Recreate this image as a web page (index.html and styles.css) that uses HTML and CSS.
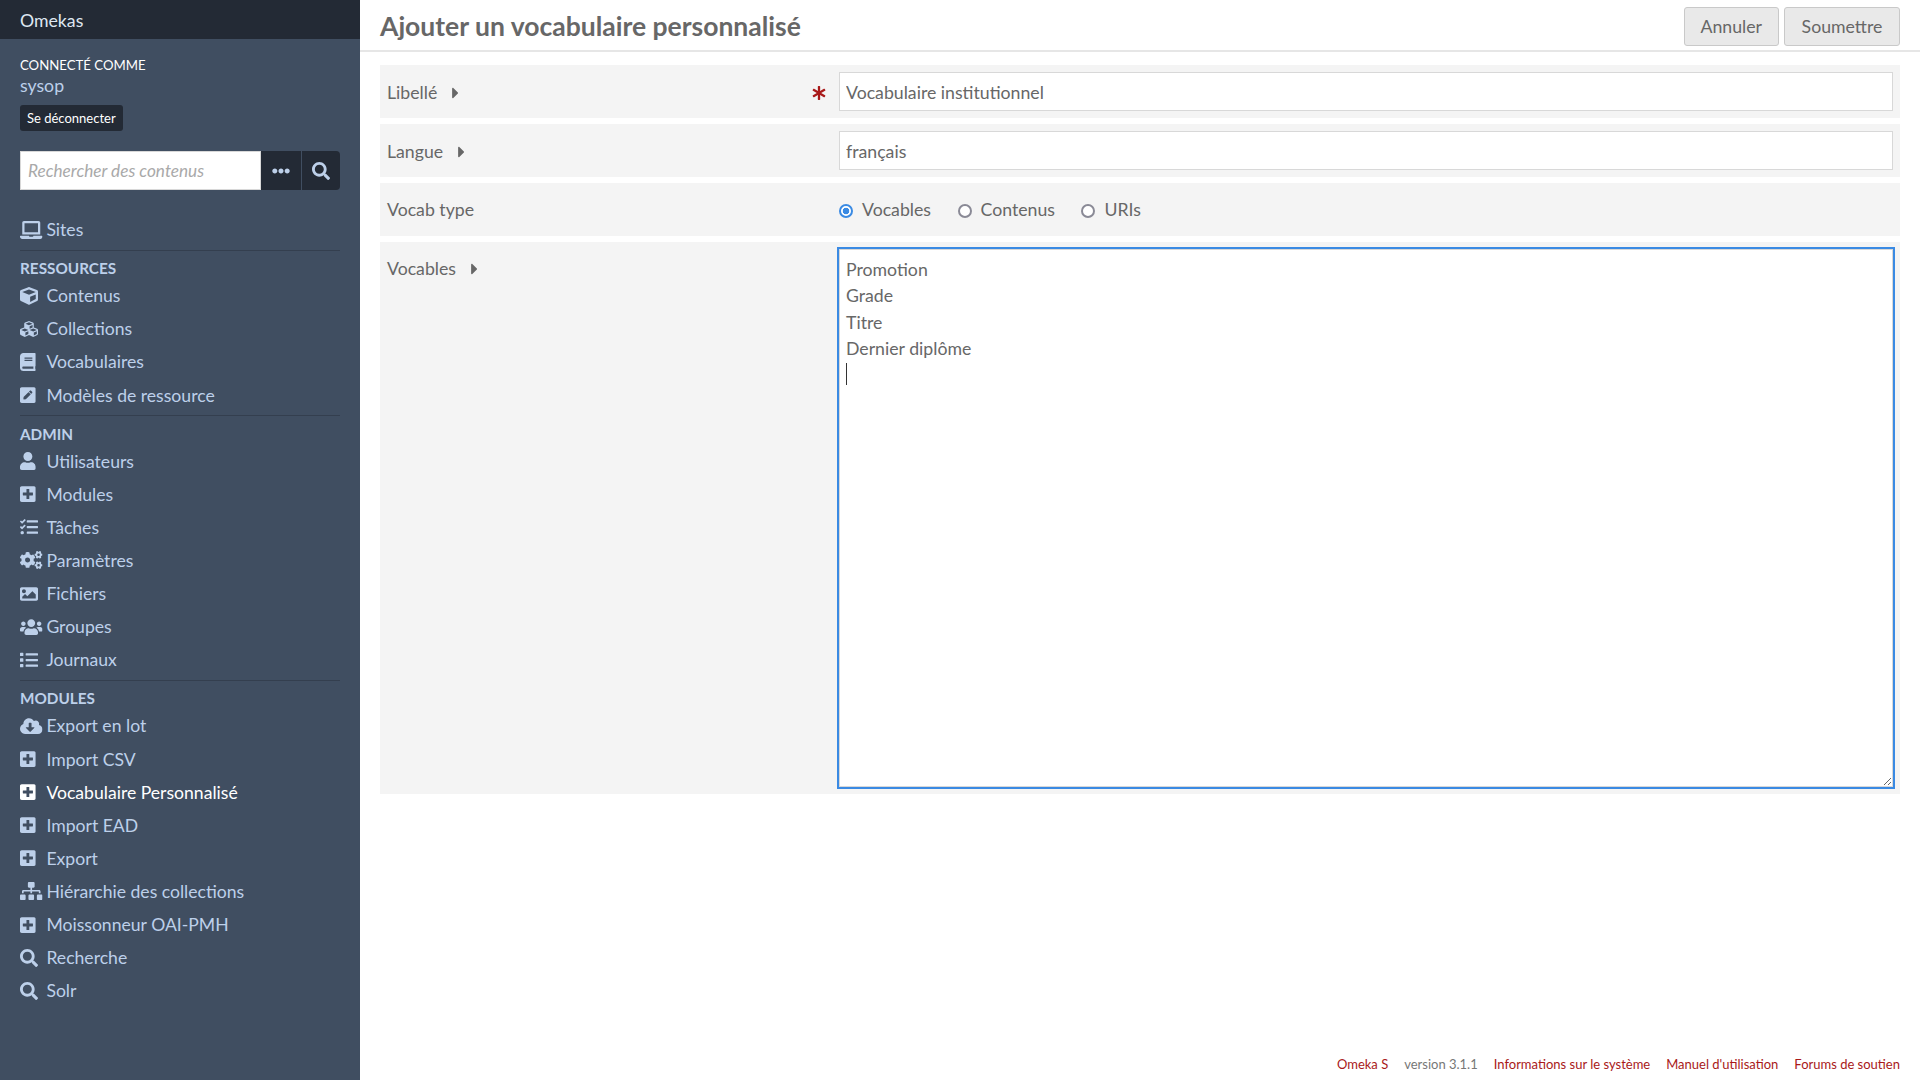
FILE: index.html
```html
<!DOCTYPE html>
<html lang="fr">

<head>
  <meta charset="UTF-8">
  <meta name="viewport" content="width=device-width, initial-scale=1.0">
  <title>Ajouter un vocabulaire personnalisé - Omekas</title>

  <link rel="stylesheet" href="styles.css">
</head>

<body>
  <svg class="icon-defs" aria-hidden="true">
    <symbol id="i-search" viewBox="0 0 512 512"><path d="M505 442.7L405.3 343c-4.5-4.5-10.6-7-17-7H372c27.6-35.3 44-79.7 44-128C416 93.1 322.9 0 208 0S0 93.1 0 208s93.1 208 208 208c48.3 0 92.7-16.4 128-44v16.3c0 6.4 2.5 12.5 7 17l99.7 99.7c9.4 9.4 24.6 9.4 33.9 0l28.3-28.3c9.4-9.4 9.4-24.6.1-34zM208 336c-70.7 0-128-57.2-128-128 0-70.7 57.2-128 128-128 70.7 0 128 57.2 128 128 0 70.7-57.2 128-128 128z"/></symbol>
    <symbol id="i-dots" viewBox="0 0 512 512"><path d="M328 256c0 39.8-32.2 72-72 72s-72-32.2-72-72 32.2-72 72-72 72 32.2 72 72zm104-72c-39.8 0-72 32.2-72 72s32.2 72 72 72 72-32.2 72-72-32.2-72-72-72zm-352 0c-39.8 0-72 32.2-72 72s32.2 72 72 72 72-32.2 72-72-32.2-72-72-72z"/></symbol>
    <symbol id="i-plus" viewBox="0 0 448 512"><path d="M400 32H48C21.5 32 0 53.5 0 80v352c0 26.5 21.5 48 48 48h352c26.5 0 48-21.5 48-48V80c0-26.5-21.5-48-48-48zm-32 252c0 6.6-5.4 12-12 12h-92v92c0 6.6-5.4 12-12 12h-56c-6.6 0-12-5.4-12-12v-92H92c-6.6 0-12-5.4-12-12v-56c0-6.6 5.4-12 12-12h92v-92c0-6.6 5.4-12 12-12h56c6.6 0 12 5.4 12 12v92h92c6.6 0 12 5.4 12 12v56z"/></symbol>
    <symbol id="i-user" viewBox="0 0 448 512"><path d="M224 256c70.7 0 128-57.3 128-128S294.7 0 224 0 96 57.3 96 128s57.3 128 128 128zm89.6 32h-16.7c-22.2 10.2-46.9 16-72.9 16s-50.6-5.8-72.9-16h-16.7C60.2 288 0 348.2 0 422.4V464c0 26.5 21.5 48 48 48h352c26.5 0 48-21.5 48-48v-41.6c0-74.2-60.2-134.4-134.4-134.4z"/></symbol>
    <symbol id="i-laptop" viewBox="0 0 640 512"><path d="M624 416H381.54c-.74 19.81-14.71 32-32.74 32H288c-18.69 0-33.02-17.47-32.77-32H16c-8.8 0-16 7.2-16 16v16c0 35.2 28.8 64 64 64h512c35.2 0 64-28.8 64-64v-16c0-8.8-7.2-16-16-16zM576 48c0-26.4-21.6-48-48-48H112C85.6 0 64 21.6 64 48v336h512V48zm-64 272H128V64h384v256z"/></symbol>
    <symbol id="i-cube" viewBox="0 0 512 512"><path d="M239.1 6.3l-208 78c-18.7 7-31.1 25-31.1 45v225.1c0 18.2 10.3 34.8 26.5 42.9l208 104c13.5 6.8 29.4 6.8 42.9 0l208-104c16.3-8.1 26.5-24.8 26.5-42.9V129.3c0-20-12.4-37.9-31.1-44.9l-208-78C262 2.2 250 2.2 239.1 6.3zM256 68.4l192 72v1.1l-192 78-192-78v-1.1l192-72zm32 356V275.5l160-65v133.9l-160 80z"/></symbol>
    <symbol id="i-cubes" viewBox="0 0 512 512"><path d="M488.6 250.2L392 214V105.5c0-15-9.3-28.4-23.4-33.7l-100-37.5c-8.1-3.1-17.1-3.1-25.3 0l-100 37.5c-14.1 5.3-23.4 18.7-23.4 33.7V214l-96.6 36.2C9.3 255.5 0 268.9 0 283.9V394c0 13.6 7.7 26.1 19.9 32.2l100 50c10.1 5.1 22.1 5.1 32.2 0l103.9-52 103.9 52c10.1 5.1 22.1 5.1 32.2 0l100-50c12.2-6.1 19.9-18.6 19.9-32.2V283.9c0-15-9.3-28.4-23.4-33.7zM358 214.8l-85 31.9v-68.2l85-37v73.3zM154 104.1l102-38.2 102 38.2v.6l-102 41.4-102-41.4v-.6zm84 291.1l-85 42.5v-79.1l85-38.8v75.4zm0-112l-102 41.4-102-41.4v-.6l102-38.2 102 38.2v.6zm240 112l-85 42.5v-79.1l85-38.8v75.4zm0-112l-102 41.4-102-41.4v-.6l102-38.2 102 38.2v.6z"/></symbol>
    <symbol id="i-book" viewBox="0 0 448 512"><path d="M448 360V24c0-13.3-10.7-24-24-24H96C43 0 0 43 0 96v320c0 53 43 96 96 96h328c13.3 0 24-10.7 24-24v-16c0-7.5-3.5-14.3-8.9-18.7-4.2-15.4-4.2-59.3 0-74.7 5.4-4.3 8.9-11.1 8.9-18.6zM128 134c0-3.3 2.7-6 6-6h212c3.3 0 6 2.7 6 6v20c0 3.3-2.7 6-6 6H134c-3.3 0-6-2.7-6-6v-20zm0 64c0-3.3 2.7-6 6-6h212c3.3 0 6 2.7 6 6v20c0 3.3-2.7 6-6 6H134c-3.3 0-6-2.7-6-6v-20zm253.4 250H96c-17.7 0-32-14.3-32-32 0-17.6 14.4-32 32-32h285.4c-1.9 17.1-1.9 46.9 0 64z"/></symbol>
    <symbol id="i-pen" viewBox="0 0 448 512"><path d="M400 480H48c-26.5 0-48-21.5-48-48V80c0-26.5 21.5-48 48-48h352c26.5 0 48 21.5 48 48v352c0 26.5-21.5 48-48 48zM238.1 177.9L102.4 313.6l-6.3 57.1c-.8 7.6 5.6 14.1 13.3 13.3l57.1-6.3L302.2 242c2.3-2.3 2.3-6.1 0-8.5L246.7 178c-2.5-2.4-6.3-2.4-8.6-.1zM345 165.1L314.9 135c-9.4-9.4-24.6-9.4-33.9 0l-23.1 23.1c-2.3 2.3-2.3 6.1 0 8.5l55.5 55.5c2.3 2.3 6.1 2.3 8.5 0L345 199c9.3-9.3 9.3-24.5 0-33.9z"/></symbol>
    <symbol id="i-tasks" viewBox="0 0 512 512"><path d="M139.61 35.5a12 12 0 0 0-17 0L58.93 98.81l-22.7-22.12a12 12 0 0 0-17 0L3.53 92.41a12 12 0 0 0 0 17l47.59 47.4a12.78 12.78 0 0 0 17.61 0l15.59-15.62L156.52 69a12.09 12.09 0 0 0 .09-17zm0 159.19a12 12 0 0 0-17 0l-63.68 63.72-22.7-22.1a12 12 0 0 0-17 0L3.53 252a12 12 0 0 0 0 17L51 316.5a12.77 12.77 0 0 0 17.6 0l15.7-15.69 72.2-72.22a12 12 0 0 0 .09-16.9zM64 368c-26.49 0-48.59 21.5-48.59 48S37.53 464 64 464a48 48 0 0 0 0-96zm432 16H208a16 16 0 0 0-16 16v32a16 16 0 0 0 16 16h288a16 16 0 0 0 16-16v-32a16 16 0 0 0-16-16zm0-320H208a16 16 0 0 0-16 16v32a16 16 0 0 0 16 16h288a16 16 0 0 0 16-16V80a16 16 0 0 0-16-16zm0 160H208a16 16 0 0 0-16 16v32a16 16 0 0 0 16 16h288a16 16 0 0 0 16-16v-32a16 16 0 0 0-16-16z"/></symbol>
    <symbol id="i-cogs" viewBox="0 0 640 512"><path d="M512.1 191l-8.2 14.3c-3 5.3-9.4 7.5-15.1 5.4-11.8-4.4-22.6-10.7-32.1-18.6-4.6-3.8-5.8-10.5-2.8-15.7l8.2-14.3c-6.9-8-12.3-17.3-15.9-27.4h-16.5c-6 0-11.2-4.3-12.2-10.3-2-12-2.1-24.6 0-37.1 1-6 6.2-10.4 12.2-10.4h16.5c3.6-10.1 9-19.4 15.9-27.4l-8.2-14.3c-3-5.2-1.9-11.9 2.8-15.7 9.5-7.9 20.4-14.2 32.1-18.6 5.7-2.1 12.1.1 15.1 5.4l8.2 14.3c10.5-1.9 21.2-1.9 31.7 0L552 6.3c3-5.3 9.4-7.5 15.1-5.4 11.8 4.4 22.6 10.7 32.1 18.6 4.6 3.8 5.8 10.5 2.8 15.7l-8.2 14.3c6.9 8 12.3 17.3 15.9 27.4h16.5c6 0 11.2 4.3 12.2 10.3 2 12 2.1 24.6 0 37.1-1 6-6.2 10.4-12.2 10.4h-16.5c-3.6 10.1-9 19.4-15.9 27.4l8.2 14.3c3 5.2 1.9 11.9-2.8 15.7-9.5 7.9-20.4 14.2-32.1 18.6-5.7 2.1-12.1-.1-15.1-5.4l-8.2-14.3c-10.4 1.9-21.2 1.9-31.7 0zm-10.5-58.8c38.5 29.6 82.4-14.3 52.8-52.8-38.5-29.7-82.4 14.3-52.8 52.8zM386.3 286.1l33.7 16.8c10.1 5.8 14.5 18.1 10.5 29.1-8.9 24.2-26.4 46.4-42.6 65.8-7.4 8.9-20.2 11.1-30.3 5.3l-29.1-16.8c-16 13.7-34.6 24.6-54.9 31.7v33.6c0 11.6-8.3 21.6-19.7 23.6-24.6 4.2-50.4 4.4-75.9 0-11.5-2-20-11.9-20-23.6V418c-20.3-7.2-38.9-18-54.9-31.7L74 403c-10 5.8-22.9 3.6-30.3-5.3-16.2-19.4-33.3-41.6-42.2-65.7-4-10.9.4-23.2 10.5-29.1l33.3-16.8c-3.9-20.9-3.9-42.4 0-63.4L12 205.8c-10.1-5.8-14.6-18.1-10.5-29 8.9-24.2 26-46.4 42.2-65.8 7.4-8.9 20.2-11.1 30.3-5.3l29.1 16.8c16-13.7 34.6-24.6 54.9-31.7V57.1c0-11.5 8.2-21.5 19.6-23.5 24.6-4.2 50.5-4.4 76-.1 11.5 2 20 11.9 20 23.6v33.6c20.3 7.2 38.9 18 54.9 31.7l29.1-16.8c10-5.8 22.9-3.6 30.3 5.3 16.2 19.4 33.2 41.6 42.1 65.8 4 10.9.1 23.2-10 29.1l-33.7 16.8c3.9 21 3.9 42.5 0 63.5zm-117.6 21.1c59.2-77-28.7-164.9-105.7-105.7-59.2 77 28.7 164.9 105.7 105.7zm243.4 182.7l-8.2 14.3c-3 5.3-9.4 7.5-15.1 5.4-11.8-4.4-22.6-10.7-32.1-18.6-4.6-3.8-5.8-10.5-2.8-15.7l8.2-14.3c-6.9-8-12.3-17.3-15.9-27.4h-16.5c-6 0-11.2-4.3-12.2-10.3-2-12-2.1-24.6 0-37.1 1-6 6.2-10.4 12.2-10.4h16.5c3.6-10.1 9-19.4 15.9-27.4l-8.2-14.3c-3-5.2-1.9-11.9 2.8-15.7 9.5-7.9 20.4-14.2 32.1-18.6 5.7-2.1 12.1.1 15.1 5.4l8.2 14.3c10.5-1.9 21.2-1.9 31.7 0l8.2-14.3c3-5.3 9.4-7.5 15.1-5.4 11.8 4.4 22.6 10.7 32.1 18.6 4.6 3.8 5.8 10.5 2.8 15.7l-8.2 14.3c6.9 8 12.3 17.3 15.9 27.4h16.5c6 0 11.2 4.3 12.2 10.3 2 12 2.1 24.6 0 37.1-1 6-6.2 10.4-12.2 10.4h-16.5c-3.6 10.1-9 19.4-15.9 27.4l8.2 14.3c3 5.2 1.9 11.9-2.8 15.7-9.5 7.9-20.4 14.2-32.1 18.6-5.7 2.1-12.1-.1-15.1-5.4l-8.2-14.3c-10.4 1.9-21.2 1.9-31.7 0zM501.6 431c38.5 29.6 82.4-14.3 52.8-52.8-38.5-29.6-82.4 14.3-52.8 52.8z"/></symbol>
    <symbol id="i-image" viewBox="0 0 512 512"><path d="M464 448H48c-26.51 0-48-21.49-48-48V112c0-26.51 21.49-48 48-48h416c26.51 0 48 21.49 48 48v288c0 26.51-21.49 48-48 48zM112 120c-30.928 0-56 25.072-56 56s25.072 56 56 56 56-25.072 56-56-25.072-56-56-56zM64 384h384V272l-87.515-87.515c-4.686-4.686-12.284-4.686-16.971 0L208 320l-55.515-55.515c-4.686-4.686-12.284-4.686-16.971 0L64 336v48z"/></symbol>
    <symbol id="i-users" viewBox="0 0 640 512"><path d="M96 224c35.3 0 64-28.7 64-64s-28.7-64-64-64-64 28.7-64 64 28.7 64 64 64zm448 0c35.3 0 64-28.7 64-64s-28.7-64-64-64-64 28.7-64 64 28.7 64 64 64zm32 32h-64c-17.6 0-33.5 7.1-45.1 18.6 40.3 22.1 68.9 62 75.1 109.4h66c17.7 0 32-14.3 32-32v-32c0-35.3-28.7-64-64-64zm-256 0c61.9 0 112-50.1 112-112S381.9 32 320 32 208 82.1 208 144s50.1 112 112 112zm76.8 32h-8.3c-20.8 10-43.9 16-68.5 16s-47.6-6-68.5-16h-8.3C179.6 288 128 339.6 128 403.2V432c0 26.5 21.5 48 48 48h288c26.5 0 48-21.5 48-48v-28.8c0-63.6-51.6-115.2-115.2-115.2zm-223.7-13.4C161.5 263.1 145.6 256 128 256H64c-35.3 0-64 28.7-64 64v32c0 17.7 14.3 32 32 32h65.9c6.3-47.4 34.9-87.3 75.2-109.4z"/></symbol>
    <symbol id="i-list" viewBox="0 0 512 512"><path d="M80 368H16a16 16 0 0 0-16 16v64a16 16 0 0 0 16 16h64a16 16 0 0 0 16-16v-64a16 16 0 0 0-16-16zm0-320H16A16 16 0 0 0 0 64v64a16 16 0 0 0 16 16h64a16 16 0 0 0 16-16V64a16 16 0 0 0-16-16zm0 160H16a16 16 0 0 0-16 16v64a16 16 0 0 0 16 16h64a16 16 0 0 0 16-16v-64a16 16 0 0 0-16-16zm416 176H176a16 16 0 0 0-16 16v32a16 16 0 0 0 16 16h320a16 16 0 0 0 16-16v-32a16 16 0 0 0-16-16zm0-320H176a16 16 0 0 0-16 16v32a16 16 0 0 0 16 16h320a16 16 0 0 0 16-16V80a16 16 0 0 0-16-16zm0 160H176a16 16 0 0 0-16 16v32a16 16 0 0 0 16 16h320a16 16 0 0 0 16-16v-32a16 16 0 0 0-16-16z"/></symbol>
    <symbol id="i-cloud" viewBox="0 0 640 512"><path d="M537.6 226.6c4.1-10.7 6.4-22.4 6.4-34.6 0-53-43-96-96-96-19.7 0-38.1 6-53.3 16.2C367 64.2 315.3 32 256 32c-88.4 0-160 71.6-160 160 0 2.7.1 5.4.2 8.1C40.2 219.8 0 273.2 0 336c0 79.5 64.5 144 144 144h368c70.7 0 128-57.3 128-128 0-61.9-44-113.6-102.4-125.4zm-132.9 88.7L299.3 420.7c-6.2 6.2-16.4 6.2-22.6 0L171.3 315.3c-10.1-10.1-2.9-27.3 11.3-27.3H248V176c0-8.8 7.2-16 16-16h48c8.8 0 16 7.2 16 16v112h65.4c14.2 0 21.4 17.2 11.3 27.3z"/></symbol>
    <symbol id="i-sitemap" viewBox="0 0 640 512"><path d="M128 352H32c-17.67 0-32 14.33-32 32v96c0 17.67 14.33 32 32 32h96c17.67 0 32-14.33 32-32v-96c0-17.67-14.33-32-32-32zm-24-80h192v48h48v-48h192v48h48v-57.59c0-21.17-17.23-38.41-38.41-38.41H344v-64h40c17.67 0 32-14.33 32-32V32c0-17.67-14.33-32-32-32H256c-17.67 0-32 14.33-32 32v96c0 17.67 14.33 32 32 32h40v64H94.41C73.23 224 56 241.23 56 262.41V320h48v-48zm264 80h-96c-17.67 0-32 14.33-32 32v96c0 17.67 14.33 32 32 32h96c17.67 0 32-14.33 32-32v-96c0-17.67-14.33-32-32-32zm240 0h-96c-17.67 0-32 14.33-32 32v96c0 17.67 14.33 32 32 32h96c17.67 0 32-14.33 32-32v-96c0-17.67-14.33-32-32-32z"/></symbol>
    <symbol id="i-caret" viewBox="0 0 192 512"><path d="M0 384.662V127.338c0-17.818 21.543-26.741 34.142-14.142l128.662 128.662c7.81 7.81 7.81 20.474 0 28.284L34.142 398.804C21.543 411.404 0 402.48 0 384.662z"/></symbol>
    <symbol id="i-asterisk" viewBox="0 0 512 512"><path d="M478.21 334.093L336 256l142.21-78.093c11.795-6.477 15.961-21.384 9.232-33.037l-19.48-33.741c-6.728-11.653-21.72-15.499-33.227-8.523L296 186.718l3.475-162.204C299.763 11.061 288.937 0 275.48 0h-38.96c-13.456 0-24.283 11.061-23.994 24.514L216 186.718 77.265 102.607c-11.506-6.976-26.499-3.13-33.227 8.523l-19.48 33.741c-6.728 11.653-2.562 26.56 9.233 33.037L176 256 33.79 334.093c-11.795 6.477-15.961 21.384-9.232 33.037l19.48 33.741c6.728 11.653 21.721 15.499 33.227 8.523L216 325.282l-3.475 162.204C212.237 500.939 223.064 512 236.52 512h38.961c13.456 0 24.283-11.061 23.995-24.514L296 325.282l138.735 84.111c11.506 6.976 26.499 3.13 33.227-8.523l19.48-33.741c6.728-11.653 2.563-26.559-9.232-33.036z"/></symbol>
  </svg>

  <aside class="sidebar">
    <div class="brand">Omekas</div>

    <div class="account">
      <div class="account-title">CONNECTÉ COMME</div>
      <div class="account-name">sysop</div>
      <a class="logout" href="#">Se déconnecter</a>
    </div>

    <form class="search">
      <input class="search-input" type="text" placeholder="Rechercher des contenus">
      <button class="search-btn" type="button"><svg class="dots"><use href="#i-dots"></use></svg></button>
      <button class="search-btn search-go" type="button"><svg class="glass"><use href="#i-search"></use></svg></button>
    </form>

    <nav class="nav">
      <section class="nav-group">
        <a class="nav-item" href="#"><svg class="wide"><use href="#i-laptop"></use></svg>Sites</a>
      </section>

      <section class="nav-group">
        <h4>RESSOURCES</h4>
        <a class="nav-item" href="#"><svg><use href="#i-cube"></use></svg>Contenus</a>
        <a class="nav-item" href="#"><svg><use href="#i-cubes"></use></svg>Collections</a>
        <a class="nav-item" href="#"><svg class="narrow"><use href="#i-book"></use></svg>Vocabulaires</a>
        <a class="nav-item" href="#"><svg class="narrow"><use href="#i-pen"></use></svg>Modèles de ressource</a>
      </section>

      <section class="nav-group">
        <h4>ADMIN</h4>
        <a class="nav-item" href="#"><svg class="narrow"><use href="#i-user"></use></svg>Utilisateurs</a>
        <a class="nav-item" href="#"><svg class="narrow"><use href="#i-plus"></use></svg>Modules</a>
        <a class="nav-item" href="#"><svg><use href="#i-tasks"></use></svg>Tâches</a>
        <a class="nav-item" href="#"><svg class="wide"><use href="#i-cogs"></use></svg>Paramètres</a>
        <a class="nav-item" href="#"><svg><use href="#i-image"></use></svg>Fichiers</a>
        <a class="nav-item" href="#"><svg class="wide"><use href="#i-users"></use></svg>Groupes</a>
        <a class="nav-item" href="#"><svg><use href="#i-list"></use></svg>Journaux</a>
      </section>

      <section class="nav-group last">
        <h4>MODULES</h4>
        <a class="nav-item" href="#"><svg class="wide"><use href="#i-cloud"></use></svg>Export en lot</a>
        <a class="nav-item" href="#"><svg class="narrow"><use href="#i-plus"></use></svg>Import CSV</a>
        <a class="nav-item active" href="#"><svg class="narrow"><use href="#i-plus"></use></svg>Vocabulaire Personnalisé</a>
        <a class="nav-item" href="#"><svg class="narrow"><use href="#i-plus"></use></svg>Import EAD</a>
        <a class="nav-item" href="#"><svg class="narrow"><use href="#i-plus"></use></svg>Export</a>
        <a class="nav-item" href="#"><svg class="wide"><use href="#i-sitemap"></use></svg>Hiérarchie des collections</a>
        <a class="nav-item" href="#"><svg class="narrow"><use href="#i-plus"></use></svg>Moissonneur OAI-PMH</a>
        <a class="nav-item" href="#"><svg><use href="#i-search"></use></svg>Recherche</a>
        <a class="nav-item" href="#"><svg><use href="#i-search"></use></svg>Solr</a>
      </section>
    </nav>
  </aside>

  <div class="content">
    <header class="page-head">
      <h1>Ajouter un vocabulaire personnalisé</h1>
      <div class="page-actions">
        <a class="btn" href="#">Annuler</a>
        <button class="btn btn-submit" type="button">Soumettre</button>
      </div>
    </header>

    <main class="form">
      <div class="field">
        <div class="field-label">
          <label for="label">Libellé</label>
          <svg class="caret"><use href="#i-caret"></use></svg>
          <svg class="required"><use href="#i-asterisk"></use></svg>
        </div>
        <input id="label" class="text-input" type="text" value="Vocabulaire institutionnel">
      </div>

      <div class="field">
        <div class="field-label">
          <label for="lang">Langue</label>
          <svg class="caret"><use href="#i-caret"></use></svg>
        </div>
        <input id="lang" class="text-input" type="text" value="français">
      </div>

      <div class="field">
        <div class="field-label field-label-plain">
          <label>Vocab type</label>
        </div>
        <div class="radios">
          <label class="radio"><span class="dot checked"></span>Vocables</label>
          <label class="radio"><span class="dot"></span>Contenus</label>
          <label class="radio"><span class="dot"></span>URIs</label>
        </div>
      </div>

      <div class="field field-tall">
        <div class="field-label">
          <label for="terms">Vocables</label>
          <svg class="caret"><use href="#i-caret"></use></svg>
        </div>
        <div class="terms-wrap">
          <textarea id="terms" class="terms">Promotion
Grade
Titre
Dernier diplôme
</textarea>
          <span class="text-caret"></span>
        </div>
      </div>
    </main>

    <footer class="foot">
      <a href="#">Omeka S</a>
      <span>version 3.1.1</span>
      <a href="#">Informations sur le système</a>
      <a href="#">Manuel d'utilisation</a>
      <a href="#">Forums de soutien</a>
    </footer>
  </div>
</body>

</html>
```

FILE: styles.css
```css
* {
  box-sizing: border-box;
}

body {
  margin: 0;
  height: 1080px;
  overflow: hidden;
  display: flex;
  font-family: "Lato", "Liberation Sans", sans-serif;
  font-size: 17.7px;
  color: #676767;
  background-color: #fff;
}

a {
  text-decoration: none;
}

.icon-defs {
  display: none;
}

/* sidebar */
.sidebar {
  width: 360px;
  flex: none;
  background-color: #404e61;
  color: #bdd0ea;
}

.brand {
  height: 39px;
  padding: 1px 0 0 20px;
  line-height: 39px;
  color: #dfe7f1;
  background-color: #232a35;
}

.account {
  padding: 16px 20px 0;
}

.account-title {
  font-size: 13.2px;
  line-height: 20px;
  color: #fff;
}

.account-name {
  line-height: 24px;
  margin-top: -1px;
}

.logout {
  display: block;
  width: fit-content;
  height: 26px;
  margin-top: 7px;
  padding: 0 7px;
  line-height: 26px;
  font-size: 13px;
  color: #fff;
  background-color: #232a35;
  border-radius: 3px;
}

.search {
  display: flex;
  margin: 20px 20px 0;
  height: 39px;
}

.search-input {
  width: 241px;
  border: 1px solid #d8d8d8;
  padding: 0 7px;
  font-family: inherit;
  font-size: 17.2px;
  font-style: italic;
  color: #676767;
  background-color: #fff;
}

.search-input::placeholder {
  color: #a9a9a9;
  opacity: 1;
}

.search-btn {
  width: 40px;
  padding: 0;
  border: 0;
  display: flex;
  align-items: center;
  justify-content: center;
  color: #bdd0ea;
  background-color: #232a35;
}

.search-go {
  width: 38px;
  margin-left: 1px;
  border-radius: 0 4px 4px 0;
}

.dots {
  width: 18px;
  height: 18px;
  fill: currentColor;
}

.glass {
  width: 18px;
  height: 18px;
  fill: currentColor;
}

.nav {
  margin: 23px 20px 0;
  font-size: 17.6px;
}

.nav-group {
  border-bottom: 1px solid #343f4f;
  padding-bottom: 3.5px;
}

.nav-group.last {
  border-bottom: 0;
}

.nav-group h4 {
  margin: 0;
  padding-top: 7.6px;
  font-size: 15.3px;
  line-height: 21px;
  font-weight: 700;
}

.nav-item {
  display: grid;
  grid-template-columns: 26.4px 1fr;
  align-items: center;
  height: 33.1px;
  color: inherit;
}

.nav-item svg {
  width: 18px;
  height: 18px;
  fill: currentColor;
}

.nav-item svg.narrow {
  width: 15.75px;
}

.nav-item svg.wide {
  width: 22.5px;
}

.nav-item.active {
  color: #fff;
}

/* main column */
.content {
  flex: 1;
  min-width: 0;
  display: flex;
  flex-direction: column;
}

.page-head {
  display: flex;
  align-items: center;
  justify-content: space-between;
  height: 52px;
  padding: 2px 20px 0;
  border-bottom: 2px solid #e6e6e6;
}

.page-head h1 {
  margin: 0;
  font-size: 26.5px;
  font-weight: 700;
  color: #676767;
}

.page-actions {
  display: flex;
  gap: 5px;
}

.btn {
  display: block;
  height: 39px;
  padding: 0 16px;
  line-height: 37px;
  font-family: inherit;
  font-size: 17.7px;
  color: #676767;
  background-color: #e9e9e9;
  border: 1px solid #c9c9c9;
  border-radius: 3px;
}

.btn-submit {
  width: 116px;
}

.form {
  padding: 13px 20px 0;
  flex: 1;
}

.field {
  display: flex;
  align-items: center;
  height: 53px;
  margin-bottom: 6px;
  padding: 0 7px;
  background-color: #f4f4f4;
}

.field-tall {
  align-items: flex-start;
  height: 552px;
  margin-bottom: 0;
  padding-top: 7px;
}

.field-label {
  width: 452px;
  flex: none;
  display: flex;
  align-items: center;
  padding-top: 2px;
}

.field-label-plain {
  padding-top: 0;
}

.field-tall .field-label {
  padding-top: 9px;
}

.caret {
  width: 7px;
  height: 18px;
  margin-left: 15px;
  fill: #676767;
}

.required {
  width: 14px;
  height: 14px;
  margin-left: auto;
  margin-right: 13px;
  fill: #a91919;
}

.text-input {
  flex: 1;
  height: 39px;
  padding: 2px 6px 0;
  font-family: inherit;
  font-size: 17.7px;
  color: #676767;
  background-color: #fff;
  border: 1px solid #d8d8d8;
}

.radios {
  display: flex;
  gap: 26.5px;
}

.radio {
  display: flex;
  align-items: center;
}

.dot {
  width: 14px;
  height: 14px;
  margin: 2px 9px 0 0;
  border: 2px solid #8a8a96;
  border-radius: 50%;
  background-color: #fff;
}

.dot.checked {
  border-color: #3a8ae3;
  background: radial-gradient(circle, #3a8ae3 0 3px, #fff 3.6px);
}

.terms-wrap {
  position: relative;
  flex: 1;
}

.terms {
  display: block;
  width: 100%;
  height: 538px;
  padding: 7px 6px;
  font-family: inherit;
  font-size: 17.7px;
  line-height: 26.3px;
  color: #676767;
  background-color: #fff;
  border: 1px solid #d8d8d8;
  outline: 2px solid #3a8ae3;
  resize: vertical;
}

.text-caret {
  position: absolute;
  left: 7px;
  top: 114px;
  width: 1px;
  height: 22px;
  background-color: #333;
}

.foot {
  display: flex;
  justify-content: flex-end;
  gap: 16px;
  padding: 0 20px 6px;
  font-size: 13px;
  line-height: 20px;
  color: #777;
}

.foot a {
  color: #a91919;
}
```
